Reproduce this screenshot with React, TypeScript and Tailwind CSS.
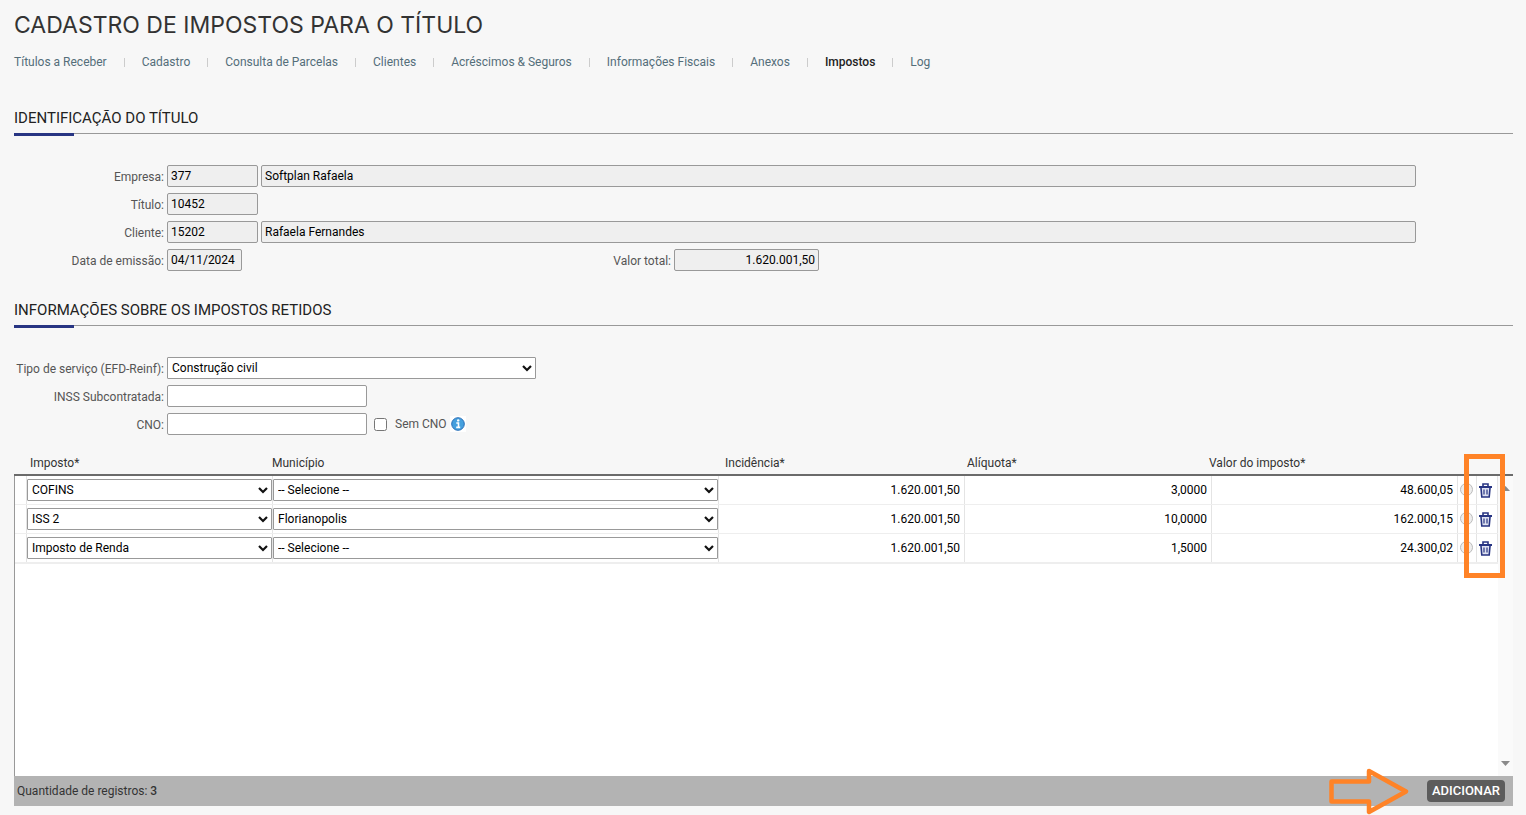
import type { ReactNode } from "react"

const tabs = [
  "Títulos a Receber",
  "Cadastro",
  "Consulta de Parcelas",
  "Clientes",
  "Acréscimos & Seguros",
  "Informações Fiscais",
  "Anexos",
  "Impostos",
  "Log",
]

const taxes = [
  { imposto: "COFINS", municipio: "-- Selecione --", incidencia: "1.620.001,50", aliquota: "3,0000", valor: "48.600,05" },
  { imposto: "ISS 2", municipio: "Florianopolis", incidencia: "1.620.001,50", aliquota: "10,0000", valor: "162.000,15" },
  { imposto: "Imposto de Renda", municipio: "-- Selecione --", incidencia: "1.620.001,50", aliquota: "1,5000", valor: "24.300,02" },
]

const field = "h-[22px] rounded-[2px] border border-[#999] px-[3px] text-black outline-none"
const readOnly = field + " bg-[#efefef]"

function Section({ title }: { title: string }) {
  return (
    <div className="relative border-b border-[#999] pb-[5px]">
      <h2 className="text-[15px] leading-5 text-[#222]">{title}</h2>
      <span className="absolute left-0 top-full h-[3px] w-[60px] bg-[#283583]"></span>
    </div>
  )
}

function Row({ id, label, children }: { id: string; label: string; children: ReactNode }) {
  return (
    <div className="flex h-[22px] items-center">
      <label htmlFor={id} className="w-[150px] shrink-0 pt-[2px] text-right text-[#555]">{label}</label>
      <div className="ml-[3px] flex grow items-center gap-[3px]">{children}</div>
    </div>
  )
}

function Select({ id, label, value, className }: { id: string; label?: string; value: string; className: string }) {
  return (
    <div className={"relative " + className}>
      <select id={id} aria-label={label} className="block h-[22px] w-full appearance-none rounded-[1px] border border-[#999] bg-white pl-1 text-black">
        <option>{value}</option>
      </select>
      <svg className="pointer-events-none absolute right-1 top-[7px]" width="10" height="8" viewBox="0 0 10 8" fill="none">
        <path d="M1 2l4 4 4-4" stroke="#111" strokeWidth="2.2" />
      </svg>
    </div>
  )
}

function Trash() {
  return (
    <svg width="13" height="15" viewBox="0 0 13 15" fill="none" stroke="#283583">
      <path d="M1.900 4l.9 10h7.400l.9-10z" fill="#dfe2f1" strokeWidth="1.6" />
      <path d="M0 4h13" strokeWidth="2" />
      <path d="M4 3.500V1h5v2.500" strokeWidth="1.6" />
      <path d="M5 6.500v5M8 6.500v5" strokeWidth="1.200" />
    </svg>
  )
}

function App() {
  return (
    <main className="min-h-screen bg-[#f7f7f7] pb-[9px] pl-[14px] pr-[13px] pt-[9px] font-[Roboto,sans-serif] text-[12px] leading-4">
      <h1 className="font-[Inter,sans-serif] text-[23px] leading-8 text-[#333]">CADASTRO DE IMPOSTOS PARA O TÍTULO</h1>
      <nav className="mt-[13px] flex items-center">
        {tabs.map((tab, i) => (
          <div key={tab} className="flex items-center">
            {i > 0 && <span className="mx-[17px] h-[9px] w-px bg-[#ccc]"></span>}
            <a href="#" className={tab === "Impostos" ? "font-medium text-[#222]" : "text-[#546e7a]"}>{tab}</a>
          </div>
        ))}
      </nav>

      <div className="mt-[38px]">
        <Section title="IDENTIFICAÇÃO DO TÍTULO" />
      </div>
      <div className="mt-[31px] flex flex-col gap-[6px] pr-[97px]">
        <Row id="empresa" label="Empresa:">
          <input id="empresa" readOnly value="377" className={readOnly + " w-[91px]"} />
          <input aria-label="Nome da empresa" readOnly value="Softplan Rafaela" className={readOnly + " grow"} />
        </Row>
        <Row id="titulo" label="Título:">
          <input id="titulo" readOnly value="10452" className={readOnly + " w-[91px]"} />
        </Row>
        <Row id="cliente" label="Cliente:">
          <input id="cliente" readOnly value="15202" className={readOnly + " w-[91px]"} />
          <input aria-label="Nome do cliente" readOnly value="Rafaela Fernandes" className={readOnly + " grow"} />
        </Row>
        <div className="grid grid-cols-[507fr_895fr]">
          <Row id="emissao" label="Data de emissão:">
            <input id="emissao" readOnly value="04/11/2024" className={readOnly + " w-[75px]"} />
          </Row>
          <Row id="total" label="Valor total:">
            <input id="total" readOnly value="1.620.001,50" className={readOnly + " w-[145px] text-right"} />
          </Row>
        </div>
      </div>

      <div className="mt-[29px]">
        <Section title="INFORMAÇÕES SOBRE OS IMPOSTOS RETIDOS" />
      </div>
      <div className="mt-[31px] flex flex-col gap-[6px]">
        <Row id="tipo" label="Tipo de serviço (EFD-Reinf):">
          <Select id="tipo" value="Construção civil" className="w-[369px]" />
        </Row>
        <Row id="inss" label="INSS Subcontratada:">
          <input id="inss" className={field + " w-[200px] bg-white"} />
        </Row>
        <Row id="cno" label="CNO:">
          <input id="cno" className={field + " w-[200px] bg-white"} />
          <input id="sem-cno" type="checkbox" className="ml-1 size-[13px]" />
          <label htmlFor="sem-cno" className="ml-[5px] text-[#555]">Sem CNO</label>
          <svg className="bg-white" width="16" height="16" viewBox="0 0 16 16">
            <circle cx="8" cy="8" r="6.300" fill="#45a0de" stroke="#2a6fb8" />
            <path d="M6.300 7h2.200v4M6.200 11.400h4" stroke="#fff" strokeWidth="1.600" fill="none" />
            <circle cx="8.200" cy="4.400" r="1.200" fill="#fff" />
          </svg>
        </Row>
      </div>

      {/* grid */}
      <div className="relative mt-5">
        <table className="block w-full">
          <thead className="block border-b-2 border-[#6b6b6b]">
            <tr className="grid h-[19px] grid-cols-[16px_242fr_453fr_242fr_242fr_304fr] text-left text-[#333] *:font-normal">
              <td></td>
              <th>Imposto*</th>
              <th>Município</th>
              <th>Incidência*</th>
              <th>Alíquota*</th>
              <th>Valor do imposto*</th>
            </tr>
          </thead>
          <tbody className="block h-[300px] border-l border-[#999] bg-white pr-[15px]">
            {taxes.map((tax, i) => (
              <tr key={i} className="grid h-[29px] grid-cols-[12px_246fr_446fr_246fr_247fr_246fr_19px_21px] border-b border-[#eee] text-right text-black *:border-r *:border-[#e4e4e4] last:border-b-2 last:h-[30px]">
                <td></td>
                <td className="pt-[3px] text-left">
                  <Select id={"imposto" + i} label="Imposto" value={tax.imposto} className="w-full" />
                </td>
                <td className="pt-[3px] text-left">
                  <Select id={"municipio" + i} label="Município" value={tax.municipio} className="w-full" />
                </td>
                <td className="pr-1 pt-[6px]">{tax.incidencia}</td>
                <td className="pr-1 pt-[6px]">{tax.aliquota}</td>
                <td className="pr-1 pt-[6px]">{tax.valor}</td>
                <td className="pl-[2px] pt-[7px]">
                  <span className="block size-[13px] rounded-full border border-[#bbb] bg-[#eee]"></span>
                </td>
                <td className="pl-[2px] pt-[7px]">
                  <button aria-label="Excluir" className="block"><Trash /></button>
                </td>
              </tr>
            ))}
          </tbody>
        </table>
        {/* scroll bar */}
        <div className="absolute bottom-0 right-0 flex h-[300px] w-[15px] flex-col items-center justify-between bg-[#fafafa] py-[10px]">
          <svg width="9" height="5" viewBox="0 0 9 5"><path d="M0 5l4.5-5L9 5z" fill="#8a8a8a" /></svg>
          <svg width="9" height="5" viewBox="0 0 9 5"><path d="M0 0h9L4.5 5z" fill="#8a8a8a" /></svg>
        </div>
        <div className="absolute right-2 top-[-1px] h-[124px] w-[41px] border-[5px] border-[#ff8327]"></div>
      </div>

      <div className="relative flex h-[30px] items-center justify-between bg-[#b3b3b3] pl-[3px] pr-2">
        <p className="text-[#333]">Quantidade de registros: <span className="font-medium">3</span></p>
        <button className="h-[22px] rounded-[4px] bg-[#5c5c5c] px-[5px] text-[13px] font-medium text-white">ADICIONAR</button>
        <svg className="absolute right-[103px] top-[-9px]" width="82" height="49" viewBox="0 0 82 49" fill="none">
          <path d="M3.500 14.500H41V4l37 20.500L41 45V34.500H3.500z" stroke="#ff8327" strokeWidth="4.500" strokeLinejoin="round" />
        </svg>
      </div>
    </main>
  )
}

export default App
